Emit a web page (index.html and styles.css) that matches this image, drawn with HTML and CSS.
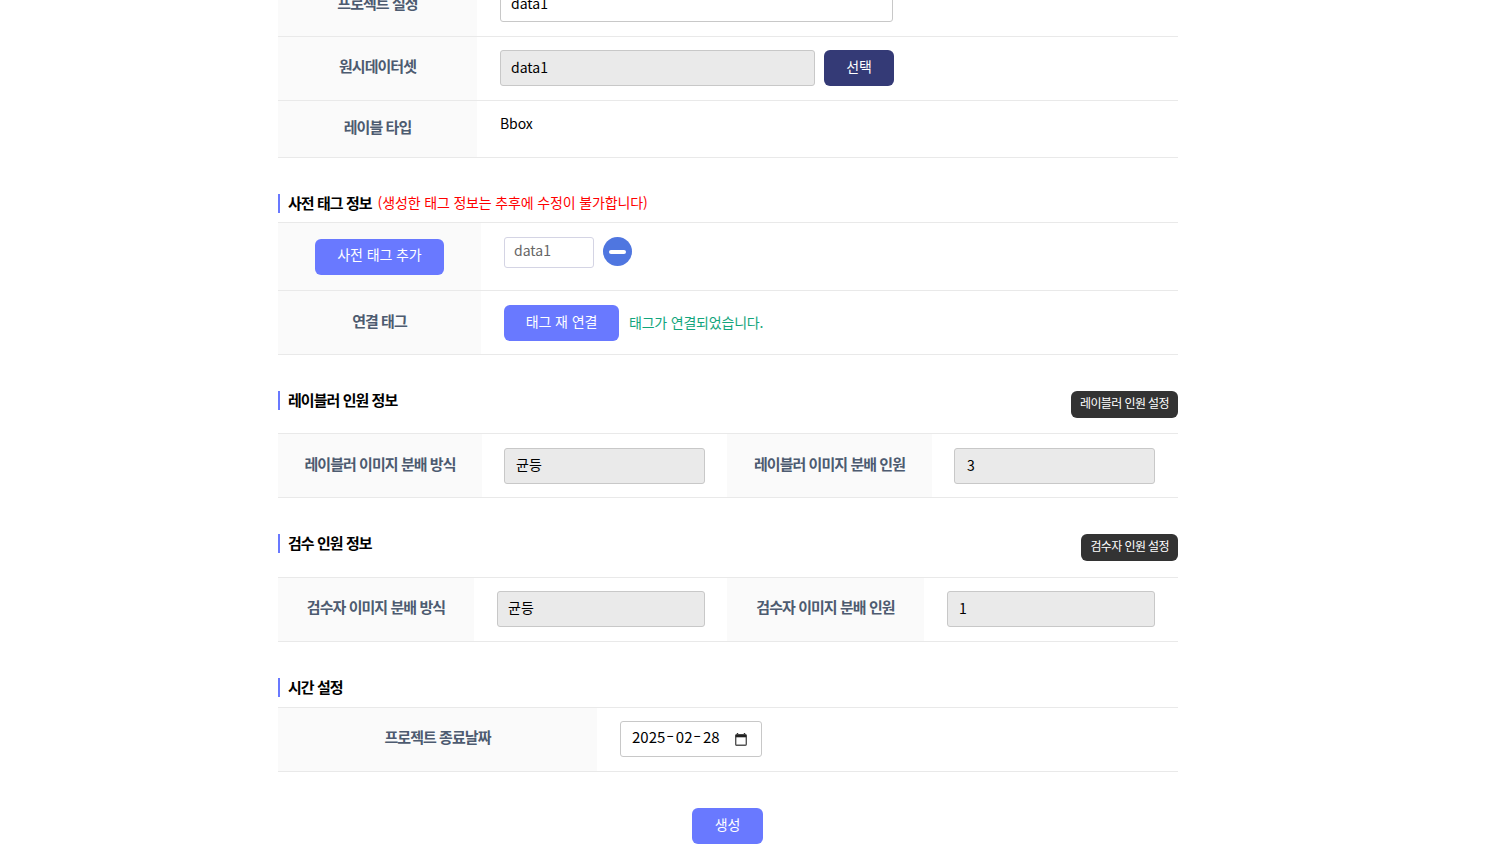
FILE: index.html
```html
<!DOCTYPE html>
<html lang="ko">
<head>
  <meta charset="UTF-8">
  <meta name="viewport" content="width=device-width, initial-scale=1.0">
  <title>프로젝트 생성</title>
  <link rel="stylesheet" href="styles.css">
</head>
<body>
  <div class="page">
    <!-- 기본 정보 -->
    <div class="row row-project row-low">
      <div class="th th-199">프로젝트 설정</div>
      <div class="td td-23"><input class="input input-name" type="text" value="data1"></div>
    </div>
    <div class="row">
      <div class="th th-199">원시데이터셋</div>
      <div class="td td-23">
        <input class="input input-dataset" type="text" value="data1" readonly>
        <button class="btn btn-navy" type="button">선택</button>
      </div>
    </div>
    <div class="row row-type">
      <div class="th th-199">레이블 타입</div>
      <div class="td td-23 type-text">Bbox</div>
    </div>

    <!-- 사전 태그 -->
    <div class="section-head head-tag">
      <h3 class="title">사전 태그 정보</h3>
      <span class="warn">(생성한 태그 정보는 추후에 수정이 불가합니다)</span>
    </div>
    <div class="table">
      <div class="row row-tag">
        <div class="th th-203 th-btn"><button class="btn btn-blue btn-add" type="button">사전 태그 추가</button></div>
        <div class="td td-tag">
          <input class="input input-tag" type="text" value="data1">
          <span class="circle"><span class="minus"></span></span>
        </div>
      </div>
      <div class="row row-low">
        <div class="th th-203">연결 태그</div>
        <div class="td td-23">
          <button class="btn btn-blue btn-relink" type="button">태그 재 연결</button>
          <span class="ok">태그가 연결되었습니다.</span>
        </div>
      </div>
    </div>

    <!-- 레이블러 -->
    <div class="section-head head-labeler">
      <h3 class="title">레이블러 인원 정보</h3>
      <button class="btn-dark" type="button">레이블러 인원 설정</button>
    </div>
    <div class="table">
      <div class="row row-low">
        <div class="th th-204">레이블러 이미지 분배 방식</div>
        <div class="td td-half"><input class="input input-201 input-kor" type="text" value="균등" readonly></div>
        <div class="th th-205">레이블러 이미지 분배 인원</div>
        <div class="td td-half"><input class="input input-201 input-num" type="text" value="3" readonly></div>
      </div>
    </div>

    <!-- 검수 -->
    <div class="section-head head-review">
      <h3 class="title">검수 인원 정보</h3>
      <button class="btn-dark" type="button">검수자 인원 설정</button>
    </div>
    <div class="table">
      <div class="row">
        <div class="th th-196">검수자 이미지 분배 방식</div>
        <div class="td td-half-r"><input class="input input-208 input-kor" type="text" value="균등" readonly></div>
        <div class="th th-197">검수자 이미지 분배 인원</div>
        <div class="td td-half-r"><input class="input input-208 input-num" type="text" value="1" readonly></div>
      </div>
    </div>

    <!-- 시간 -->
    <div class="section-head head-time">
      <h3 class="title">시간 설정</h3>
    </div>
    <div class="table">
      <div class="row">
        <div class="th th-319">프로젝트 종료날짜</div>
        <div class="td td-23">
          <div class="date-field">
            <span class="date-text">2025<span class="dash">-</span>02<span class="dash">-</span>28</span>
            <svg class="cal" width="12" height="13" viewBox="0 0 12 13" fill="none">
              <path d="M2.5 0v2M9.5 0v2" stroke="#333" stroke-width="1.4"/>
              <rect x="0.7" y="1.7" width="10.6" height="10.6" rx="1" stroke="#555" stroke-width="1.4"/>
              <rect x="0.7" y="1.7" width="10.6" height="2.6" fill="#222"/>
            </svg>
          </div>
        </div>
      </div>
    </div>

    <div class="actions">
      <button class="btn btn-blue btn-create" type="button">생성</button>
    </div>
  </div>
</body>
</html>
```

FILE: styles.css
```css
* {
  box-sizing: border-box;
}

html, body {
  margin: 0;
  height: 100%;
  overflow: hidden;
}

body {
  background: #fff;
  color: #000;
  font-family: "Noto Sans CJK KR", "Noto Sans", sans-serif;
  font-size: 14px;
}

/* the shot is scrolled, so the first row is cut off at the top */
.page {
  width: 900px;
  margin: -28px 0 0 278px;
}

.table {
  border-top: 1px solid #e9e9e9;
}

.row {
  display: flex;
  height: 64px;
  border-bottom: 1px solid #e9e9e9;
}

.row-project {
  height: 65px;
}

.row-type {
  height: 57px;
}

.row-tag {
  height: 68px;
}

.th {
  display: flex;
  flex: none;
  align-items: center;
  justify-content: center;
  padding-bottom: 6px;
  background: #fafafa;
  color: #4d5b70;
  font-size: 15px;
  font-weight: 700;
  letter-spacing: -0.95px;
}

.row-low .th {
  padding-bottom: 4px;
}

.th-btn {
  padding-bottom: 0;
}

.th-199 { width: 199px; }
.th-203 { width: 203px; }
.th-204 { width: 204px; }
.th-205 { width: 205px; }
.th-196 { width: 196px; }
.th-197 { width: 197px; }
.th-319 { width: 319px; }

.td {
  display: flex;
  flex: 1;
  align-items: flex-start;
  min-width: 0;
  padding-top: 13px;
}

.row-low .td {
  padding-top: 14px;
}

.td-23 {
  padding-left: 23px;
}

.td-half {
  flex: none;
  width: 245px;
  padding-left: 22px;
}

.td-half:last-child {
  width: 246px;
}

.td-half-r {
  flex: none;
  width: 253px;
  padding-left: 23px;
}

.td-half-r:last-child {
  width: 254px;
}

.input {
  height: 36px;
  padding: 0 10px 3px;
  border: 1px solid #c8c8c8;
  border-radius: 3px;
  background: #fff;
  color: #000;
  font-family: inherit;
  font-size: 14px;
  outline: none;
}

.input[readonly] {
  background: #eaeaea;
}

.input-name { width: 393px; }
.input-dataset { width: 315px; }
.input-201 { width: 201px; padding-left: 11px; }
.input-208 { width: 208px; }

.input-kor {
  padding-bottom: 5px;
}

.input-num {
  padding-left: 12px;
}

.input-208.input-num {
  padding-left: 11px;
}

.input-tag {
  width: 90px;
  height: 31px;
  padding: 0 9px 5px;
  border-color: #d4d4e4;
  color: #666;
}

.date-field {
  display: flex;
  align-items: center;
  justify-content: space-between;
  width: 142px;
  height: 36px;
  padding: 0 14px 0 11px;
  border: 1px solid #c8c8c8;
  border-radius: 3px;
}

.date-text {
  padding-bottom: 5px;
  font-size: 15px;
}

/* hyphens sit high and wide in the reference */
.dash {
  display: inline-block;
  width: 10.5px;
  text-align: center;
  transform: translateY(-1px) scaleX(1.5);
}

.cal {
  flex: none;
  margin-top: 1px;
}

.btn {
  height: 36px;
  padding: 0 0 5px;
  border: none;
  border-radius: 6px;
  color: #fff;
  font-family: inherit;
  font-size: 14px;
  letter-spacing: -0.1px;
}

.btn-navy {
  width: 70px;
  margin-left: 9px;
  background: #343a76;
}

.btn-blue {
  background: #6979ff;
}

.btn-add {
  width: 129px;
}

.btn-relink {
  width: 115px;
}

.btn-create {
  width: 71px;
}

.btn-dark {
  height: 27px;
  padding: 0 9px 4px;
  border: none;
  border-radius: 6px;
  background: #333;
  color: #fff;
  font-family: inherit;
  font-size: 12px;
  letter-spacing: -0.6px;
}

.td.type-text {
  padding-top: 12px;
  letter-spacing: -0.1px;
}

.td.td-tag {
  padding: 14px 0 0 23px;
}

.circle {
  display: flex;
  align-items: center;
  justify-content: center;
  width: 29px;
  height: 29px;
  margin-left: 9px;
  border-radius: 50%;
  background: #4f76e0;
}

.minus {
  width: 17px;
  height: 4px;
  border-radius: 2px;
  background: #fff;
}

.ok {
  margin-left: 10px;
  color: #12a57c;
  font-size: 14px;
  line-height: 34px;
  letter-spacing: -0.2px;
}

.section-head {
  display: flex;
  align-items: flex-start;
}

.title {
  height: 19px;
  margin: 0;
  padding-left: 8px;
  border-left: 2px solid #6979ff;
  font-size: 15px;
  font-weight: 700;
  line-height: 18px;
  letter-spacing: -0.95px;
}

.warn {
  margin-left: 6px;
  color: #f00;
  font-size: 14px;
  line-height: 17px;
  letter-spacing: -0.15px;
}

.head-tag {
  height: 28px;
  margin-top: 36px;
}

.head-labeler,
.head-review {
  justify-content: space-between;
  height: 42px;
  margin-top: 36px;
}

.head-review {
  height: 43px;
}

.head-time {
  height: 29px;
  margin-top: 36px;
}

.actions {
  display: flex;
  justify-content: center;
  margin-top: 36px;
  padding-right: 1px;
}
```
